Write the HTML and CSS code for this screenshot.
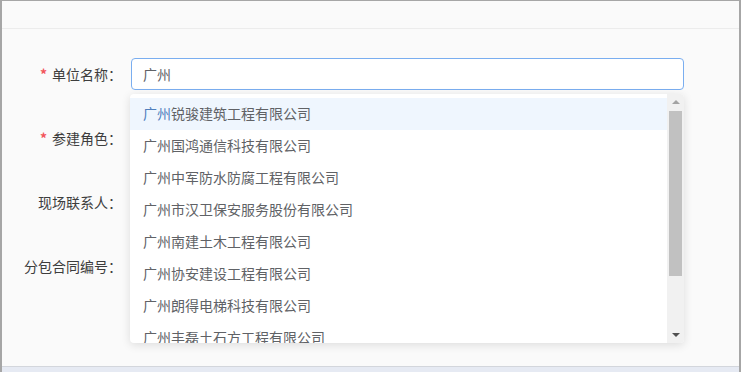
FILE: index.html
```html
<!DOCTYPE html>
<html lang="zh-CN">
<head>
<meta charset="utf-8">
<title>表单</title>
<link rel="stylesheet" href="styles.css">
</head>
<body>
<div class="frame">
  <div class="header"></div>
  <div class="content">
    <div class="form-item">
      <label class="label"><span class="req">*</span>单位名称：</label>
      <div class="control">
        <div class="input">广州</div>
        <div class="dropdown">
          <ul class="list">
            <li class="item active"><span class="hl">广州</span>锐骏建筑工程有限公司</li>
            <li class="item">广州国鸿通信科技有限公司</li>
            <li class="item">广州中军防水防腐工程有限公司</li>
            <li class="item">广州市汉卫保安服务股份有限公司</li>
            <li class="item">广州南建土木工程有限公司</li>
            <li class="item">广州协安建设工程有限公司</li>
            <li class="item">广州朗得电梯科技有限公司</li>
            <li class="item">广州丰磊土石方工程有限公司</li>
          </ul>
          <div class="scrollbar">
            <div class="sb-btn"><span class="tri-up"></span></div>
            <div class="sb-track"><div class="sb-thumb"></div></div>
            <div class="sb-btn"><span class="tri-down"></span></div>
          </div>
        </div>
      </div>
    </div>
    <div class="form-item">
      <label class="label"><span class="req">*</span>参建角色：</label>
      <div class="control"></div>
    </div>
    <div class="form-item">
      <label class="label">现场联系人：</label>
      <div class="control"></div>
    </div>
    <div class="form-item">
      <label class="label">分包合同编号：</label>
      <div class="control"></div>
    </div>
  </div>
  <div class="footer"></div>
</div>
</body>
</html>
```
FILE: styles.css
```css
* { box-sizing: border-box; }
html, body { margin: 0; padding: 0; }
body {
  font-family: "Noto Sans CJK SC", "Noto Sans", sans-serif;
  font-size: 14px;
  background: #fafafa;
}
.frame {
  width: 741px;
  height: 372px;
  border-top: 1px solid #a6a6a6;
  border-left: 2px solid #a6a6a6;
  border-right: 2px solid #a6a6a6;
  background: #fafafa;
  display: flex;
  flex-direction: column;
  overflow: hidden;
}
.header {
  height: 28px;
  flex: none;
  border-bottom: 1px solid #ececec;
}
.content {
  flex: 1;
  padding-top: 29px;
  padding-right: 55px;
}
.form-item {
  display: flex;
  height: 32px;
  margin-bottom: 32px;
}
.label {
  width: 129px;
  flex: none;
  padding-right: 9px;
  text-align: right;
  line-height: 32px;
  color: #3d3d3d;
}
.req {
  color: #f2545b;
  font-weight: 700;
  margin-right: 5px;
}
.control {
  flex: 1;
  position: relative;
}
.input {
  height: 32px;
  border: 1px solid #7aaef0;
  border-radius: 4px;
  background: #fff;
  padding-left: 11px;
  line-height: 30px;
  color: #606266;
}
.dropdown {
  position: absolute;
  top: 36px;
  left: -1px;
  width: 554px;
  height: 249px;
  background: #fff;
  border-radius: 4px;
  box-shadow: 0 2px 10px rgba(0, 0, 0, 0.12);
  display: flex;
  overflow: hidden;
  z-index: 10;
}
.list {
  list-style: none;
  margin: 0;
  padding: 4px 0 0;
  flex: 1;
  overflow: hidden;
}
.item {
  height: 32px;
  line-height: 30px;
  padding-left: 13px;
  color: #606266;
  white-space: nowrap;
}
.item.active { background: #eff6fe; }
.hl { color: #4f7fbd; }
.scrollbar {
  width: 17px;
  flex: none;
  background: #f1f1f1;
  display: flex;
  flex-direction: column;
}
.sb-btn {
  height: 16px;
  flex: none;
  display: flex;
  align-items: center;
  justify-content: center;
}
.sb-track {
  flex: 1;
  padding: 1px 2px 0 2px;
}
.sb-thumb {
  height: 165px;
  background: #c1c1c1;
}
.tri-up {
  width: 0; height: 0;
  border-left: 4px solid transparent;
  border-right: 4px solid transparent;
  border-bottom: 4px solid #a3a3a3;
}
.tri-down {
  width: 0; height: 0;
  border-left: 4px solid transparent;
  border-right: 4px solid transparent;
  border-top: 4px solid #505050;
}
.footer {
  height: 6px;
  flex: none;
  border-top: 1px solid #d3d6dc;
  background: #e6eaf3;
}
```
